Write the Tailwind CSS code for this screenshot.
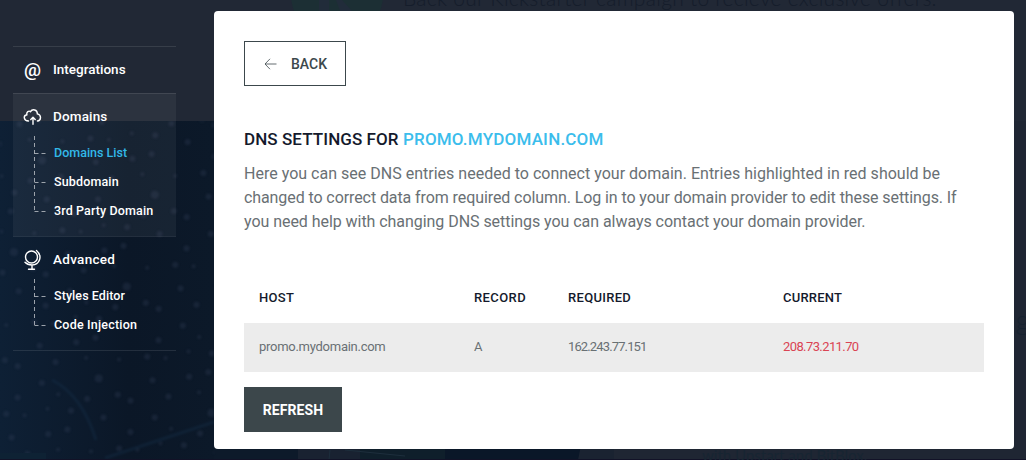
<!DOCTYPE html>
<html lang="en">
<head>
<meta charset="utf-8">
<title>DNS settings</title>
<script src="https://cdn.jsdelivr.net/npm/@tailwindcss/browser@4"></script>
</head>
<body class="relative flex h-[460px] w-[1026px] overflow-hidden bg-[#0c1828] font-['Roboto',sans-serif] antialiased">

<!-- Dimmed page behind the dialog -->
<div class="absolute inset-0 overflow-hidden" aria-hidden="true">
  <svg class="absolute inset-0" width="1026" height="460">
    <defs>
      <pattern id="blots" width="118" height="96" patternUnits="userSpaceOnUse" patternTransform="rotate(17)">
        <g fill="#34405a" opacity=".3">
          <circle cx="9" cy="10" r="3"/><circle cx="27" cy="6" r="2"/><circle cx="55" cy="17" r="3"/><circle cx="72" cy="7" r="3"/><circle cx="101" cy="21" r="2"/>
          <circle cx="21" cy="31" r="3"/><circle cx="41" cy="42" r="3"/><circle cx="69" cy="29" r="2"/><circle cx="87" cy="45" r="4"/><circle cx="110" cy="55" r="3"/>
          <circle cx="6" cy="57" r="3"/><circle cx="34" cy="66" r="3"/><circle cx="53" cy="72" r="2"/><circle cx="82" cy="68" r="3"/>
          <circle cx="15" cy="87" r="3"/><circle cx="47" cy="89" r="2"/><circle cx="70" cy="84" r="3"/><circle cx="103" cy="81" r="3"/>
        </g>
      </pattern>
      <filter id="soft" color-interpolation-filters="sRGB"><feGaussianBlur stdDeviation="1.3"/></filter>
      <linearGradient id="shade"><stop offset="0" stop-color="#0e2035"/><stop offset=".6" stop-color="#0b1727"/><stop offset="1" stop-color="#0c1929"/></linearGradient>
    </defs>
    <rect y="121" width="1026" height="339" fill="#0d1a2a"/>
    <rect y="121" width="214" height="339" fill="url(#shade)"/>
    <rect y="121" width="214" height="339" fill="url(#blots)" filter="url(#soft)"/>
    <path d="M52 380Q82 395 96 440M105 458L214 422" fill="none" stroke="#16304a" stroke-width="3" opacity=".4" filter="url(#soft)"/>
    <rect width="1026" height="121" fill="#212835"/>
    <rect x="298" y="440" width="62" height="20" fill="#192231"/>
    <rect x="360" y="440" width="85" height="20" fill="#0f1f2b"/>
    <rect x="445" y="440" width="137" height="20" fill="#0a1728"/>
    <path d="M582 440h32v20h-36z" fill="#1a2331"/>
    <rect x="614" y="121" width="412" height="339" fill="#1f2633"/>
    <circle cx="337" cy="-5" r="46" fill="#1c2f34"/>
    <path d="M319 0h10v11h-10zM336 0h6l10 11h-12z" fill="#212c3a"/>
    <path d="M330 450l-1 10M345 450l60 6" stroke="#1d2e3c" fill="none"/>
    <rect y="453" width="46" height="6" fill="#0e2234"/>
    <rect y="459" width="1026" height="1" fill="#121227"/>
  </svg>
  <span class="absolute left-[403px] top-[-15px] whitespace-nowrap font-['Lato'] text-[21px] font-light leading-[26px] tracking-[0.28px] text-[#151d2b]">Back our Kickstarter campaign to recieve exclusive offers.</span>
  <span class="absolute left-[1000px] top-[298px] font-['Lato'] text-[28px] font-light text-[#172230]">ng</span>
  <span class="absolute left-[702px] top-[445px] whitespace-nowrap font-['Lato'] text-[15px] leading-5 tracking-[0.01px] text-[#172532]">with Upstart and BitBlox.</span>
</div>

<!-- Navigation -->
<nav class="relative ml-[13px] mt-[46px] w-[163px] shrink-0 text-white">
  <a class="flex h-[47px] items-center border-t border-white/10 pb-[2px] pl-[10px] text-[13.5px] font-medium">
    <span class="w-[30px] pl-px text-[19px] font-medium leading-none">@</span><span>Integrations</span>
  </a>
  <section class="h-[143px] border-t border-white/10 bg-white/5">
    <a class="flex h-[45px] items-center pl-[10px] text-[13.5px] font-medium">
      <span class="w-[30px]"><svg width="20" height="18" viewBox="0 0 20 18" fill="none" stroke="#fff" stroke-width="1.4" stroke-linecap="round" stroke-linejoin="round"><path d="M5.500 13C.6 13-.1 7.600 3.900 6.800 3.200 3.800 5.900 2.300 7.500 3.700 9.300.5 14.600 1.500 14.300 5.900 18.800 6.800 18.300 12.600 14.400 13M10 16.200V9.700M7.800 11.500 10 9.300l2.200 2.200"/></svg></span><span class="tracking-[0.15px]">Domains</span>
    </a>
    <div class="flex pl-[20px] text-[12.5px] font-medium">
      <svg class="-mt-[5px] shrink-0" width="21" height="80" fill="none" stroke="#b5bac1" stroke-opacity=".85" stroke-dasharray="4 3"><path d="M1.500 2V78.500M1.500 19.500H14M1.500 48.500H14M1.500 77.500H14"/></svg>
      <ul class="-mt-px leading-[29px]"><li class="text-[#32b8e8]">Domains List</li><li class="tracking-[0.15px]">Subdomain</li><li class="whitespace-nowrap tracking-[0.12px]">3rd Party Domain</li></ul>
    </div>
  </section>
  <section class="h-[115px] border-y border-white/10">
    <a class="flex h-[45px] items-center pl-[10px] text-[13.5px] font-medium">
      <span class="w-[30px]"><svg width="20" height="22" viewBox="0 0 20 22" fill="none" stroke="#fff" stroke-width="1.4" stroke-linecap="round"><circle cx="8.500" cy="8" r="6"/><path d="M13.500 1.500C20 7 16.500 16 9 16 6 16 3.500 15 2 13.300M9 16v4M5.500 20.300h6"/></svg></span><span class="tracking-[0.3px]">Advanced</span>
    </a>
    <div class="flex pl-[20px] text-[12.5px] font-medium">
      <svg class="-mt-[5px] shrink-0" width="21" height="51" fill="none" stroke="#b5bac1" stroke-opacity=".85" stroke-dasharray="4 3"><path d="M1.500 2V49.500M1.500 19.500H14M1.500 48.500H14"/></svg>
      <ul class="-mt-px leading-[29px]"><li class="tracking-[0.08px]">Styles Editor</li><li class="tracking-[0.2px]">Code Injection</li></ul>
    </div>
  </section>
</nav>

<!-- Dialog -->
<main class="relative ml-[38px] mt-[11px] h-[438px] w-[800px] shrink-0 rounded-[4px] bg-white px-[30px] pt-[30px] text-[#697074]">
  <button class="flex h-[45px] w-[102px] items-center gap-[14px] border border-[#3c484c] pl-[19px] text-[14px] font-medium text-[#3c484c]">
    <svg width="13" height="12" fill="none" stroke="#3c484c" stroke-width=".8"><path d="M12.500 6H1M6 .8 1 6l5 5.200"/></svg><span class="pt-px">BACK</span>
  </button>
  <h1 class="mt-[41px] whitespace-nowrap text-[17px] font-medium leading-6 text-[#141a2c]"><span class="tracking-[0.08px]">DNS SETTINGS FOR </span><span class="tracking-[0.2px] text-[#3bbdec]">PROMO.MYDOMAIN.COM</span></h1>
  <p class="mt-[11px] whitespace-nowrap text-[16px] leading-6"><span class="tracking-[0.01px]">Here you can see DNS entries needed to connect your domain. Entries highlighted in red should be</span><br><span class="tracking-[-0.09px]">changed to correct data from required column. Log in to your domain provider to edit these settings. If</span><br><span class="tracking-[-0.05px]">you need help with changing DNS settings you can always contact your domain provider.</span></p>
  <div class="mt-[39px] grid h-[50px] grid-cols-[215px_94px_215px_1fr] items-center pl-[15px] text-[13px] font-medium text-[#141a2c]"><span class="tracking-[0.3px]">HOST</span><span class="tracking-[0.4px]">RECORD</span><span class="tracking-[0.3px]">REQUIRED</span><span class="tracking-[0.2px]">CURRENT</span></div>
  <div class="grid h-[49px] w-[740px] grid-cols-[215px_94px_215px_1fr] items-center bg-[#ececec] pb-px pl-[15px] text-[13px]"><span class="tracking-[-0.27px]">promo.mydomain.com</span><span>A</span><span class="tracking-[-0.87px]">162.243.77.151</span><span class="tracking-[-0.6px] text-[#da4453]">208.73.211.70</span></div>
  <button class="mt-[15px] h-[45px] w-[98px] bg-[#3c474b] pt-[2px] text-[14px] font-bold tracking-[0.1px] text-white">REFRESH</button>
</main>
</body>
</html>
